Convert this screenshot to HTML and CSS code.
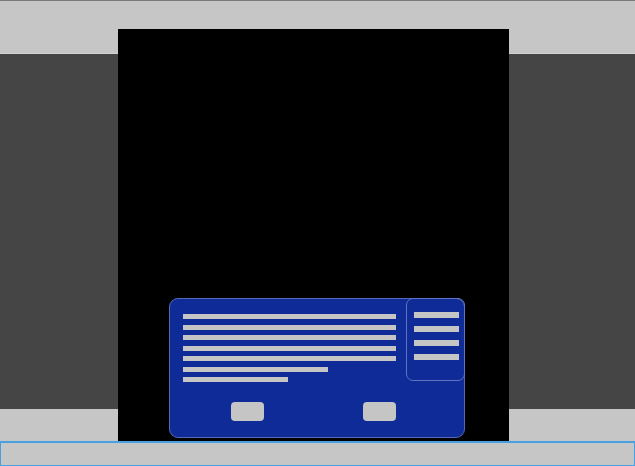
FILE: index.html
```html
<!DOCTYPE html>
<html>
<head>
<meta charset="utf-8">
<link rel="stylesheet" href="styles.css">
</head>
<body>
<div class="screen">
  <div class="side side-left"></div>
  <div class="viewport">
    <div class="card">
      <div class="card-main">
        <div class="lines">
          <div class="line"></div>
          <div class="line"></div>
          <div class="line"></div>
          <div class="line"></div>
          <div class="line"></div>
          <div class="line short-a"></div>
          <div class="line short-b"></div>
        </div>
        <div class="buttons">
          <div class="btn"></div>
          <div class="btn"></div>
        </div>
      </div>
      <div class="card-menu">
        <div class="menu-line"></div>
        <div class="menu-line"></div>
        <div class="menu-line"></div>
        <div class="menu-line"></div>
      </div>
    </div>
  </div>
  <div class="side side-right"></div>
  <div class="bottom-bar"></div>
</div>
</body>
</html>
```
FILE: styles.css
```css
html, body {
  margin: 0;
  padding: 0;
  background: #c6c6c6;
}
.screen {
  width: 635px;
  height: 466px;
  box-sizing: border-box;
  border-top: 1px solid #7a7a7a;
  background: #c6c6c6;
  display: grid;
  grid-template-columns: 118px 391px 126px;
  grid-template-rows: 28px 24px 356px 32px 25px;
}
.side {
  grid-row: 3;
  background: #454545;
  border-top: 1px solid #d2d2d2;
}
.side-left { grid-column: 1; }
.side-right { grid-column: 3; }
.viewport {
  grid-column: 2;
  grid-row: 2 / 5;
  background: #000;
  display: flex;
  flex-direction: column;
  justify-content: flex-end;
  padding: 0 0 3px 51px;
}
.card {
  width: 296px;
  height: 140px;
  box-sizing: border-box;
  background: #0e2b98;
  border: 1px solid #5569b8;
  border-radius: 9px;
  display: flex;
}
.card-main {
  width: 213px;
  padding: 15px 0 0 13px;
}
.lines {
  display: flex;
  flex-direction: column;
  gap: 5.5px;
}
.line {
  height: 5px;
  width: 213px;
  background: #c5c5c5;
}
.line.short-a { width: 145px; }
.line.short-b { width: 105px; }
.buttons {
  display: flex;
  justify-content: space-between;
  padding-left: 48px;
  margin-top: 20px;
}
.btn {
  width: 33px;
  height: 19px;
  border-radius: 4px;
  background: #c5c5c5;
}
.card-menu {
  margin: -1px -1px 0 10px;
  width: 59px;
  height: 83px;
  box-sizing: border-box;
  border: 1px solid #5f74c2;
  border-radius: 7px;
  padding: 13px 0 0 7px;
  display: flex;
  flex-direction: column;
  gap: 8px;
}
.menu-line {
  width: 45px;
  height: 6px;
  background: #c5c5c5;
}
.bottom-bar {
  grid-column: 1 / 4;
  grid-row: 5;
  box-sizing: border-box;
  background: #c6c6c6;
  border: 1px solid #48a0e0;
  border-top-width: 2px;
}
```
